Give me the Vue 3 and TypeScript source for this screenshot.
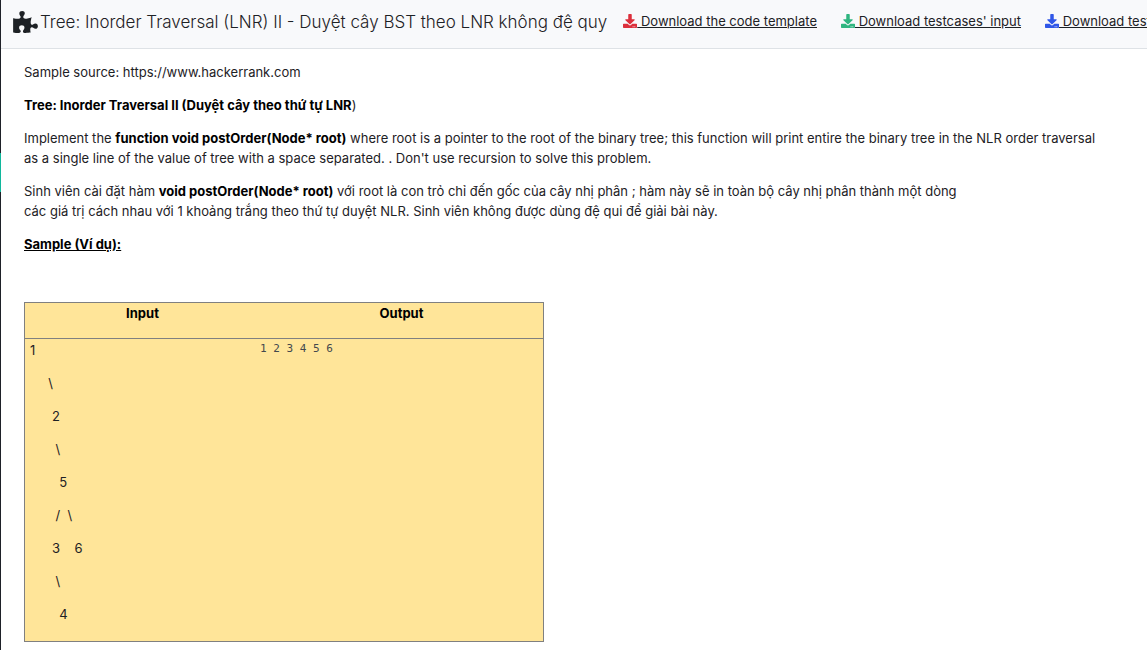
<script setup lang="ts">
interface DownloadLink {
  label: string
  tone: string
}

const downloads: DownloadLink[] = [
  { label: 'Download the code template', tone: 'red' },
  { label: "Download testcases' input", tone: 'green' },
  { label: "Download testcases' output", tone: 'blue' },
]

const treeRows: string[] = [
  '1',
  '     \\',
  '      2',
  '       \\',
  '        5',
  '       /  \\',
  '      3    6',
  '       \\',
  '        4',
]
</script>

<template>
  <div class="page">
    <aside class="rail"><span class="rail-marker"></span></aside>
    <div class="content">
      <header class="topbar">
        <h1 class="title">
          <svg class="puzzle" viewBox="0 0 576 512" aria-hidden="true">
            <path d="M519.442 288.651c-41.519 0-59.5 31.593-82.058 31.593C377.409 320.244 432 144 432 144s-196.288 80-196.288-3.297c0-35.827 36.288-46.25 36.288-85.985C272 19.216 243.885 0 210.539 0c-34.654 0-66.366 18.891-66.366 56.346 0 41.364 31.711 59.277 31.711 81.75C175.885 207.719 0 166.758 0 166.758v333.237s178.635 41.047 178.635-28.662c0-22.473-40-40.107-40-81.471 0-37.456 29.25-56.346 63.577-56.346 33.673 0 61.788 19.216 61.788 54.717 0 39.735-36.288 50.158-36.288 85.985 0 60.803 129.675 25.73 181.23 25.73 0 0-34.725-120.101 25.827-120.101 35.962 0 46.423 36.152 86.308 36.152C556.712 416 576 387.99 576 354.443c0-34.199-18.962-65.792-56.558-65.792z" />
          </svg>
          <span>Tree: Inorder Traversal (LNR) II - Duyệt cây BST theo LNR không đệ quy</span>
        </h1>
        <nav class="downloads">
          <a v-for="item in downloads" :key="item.label" href="#" class="download">
            <svg class="download-icon" :class="item.tone" viewBox="0 0 512 512" aria-hidden="true">
              <path d="M216 0h80c13.3 0 24 10.7 24 24v168h87.7c17.8 0 26.7 21.5 14.1 34.1L269.7 378.3c-7.5 7.5-19.8 7.5-27.3 0L90.1 226.1c-12.6-12.6-3.7-34.1 14.1-34.1H192V24c0-13.3 10.7-24 24-24zm296 376v112c0 13.3-10.7 24-24 24H24c-13.3 0-24-10.7-24-24V376c0-13.3 10.7-24 24-24h146.7l49 49c20.1 20.1 52.5 20.1 72.6 0l49-49H488c13.3 0 24 10.7 24 24zm-124 88c0-11-9-20-20-20s-20 9-20 20 9 20 20 20 20-9 20-20zm64 0c0-11-9-20-20-20s-20 9-20 20 9 20 20 20 20-9 20-20z" />
            </svg><span class="download-label">&nbsp;{{ item.label }}</span>
          </a>
        </nav>
      </header>

      <main class="problem">
        <p>Sample source: https://www.hackerrank.com</p>
        <p><strong>Tree: Inorder Traversal II (Duyệt cây theo thứ tự LNR</strong>)</p>
        <p>Implement the <strong>function void postOrder(Node* root)</strong> where root is a pointer to the root of the binary tree; this function will print entire the binary tree in the NLR order traversal as a single line of the value of tree with a space separated. . Don't use recursion to solve this problem.</p>
        <p>Sinh viên cài đặt hàm <strong>void postOrder(Node* root)</strong> với root là con trỏ chỉ đến gốc của cây nhị phân ; hàm này sẽ in toàn bộ cây nhị phân thành một dòng<br />các giá trị cách nhau với 1 khoảng trắng theo thứ tự duyệt NLR. Sinh viên không được dùng đệ qui để giải bài này.</p>
        <p><strong class="underlined">Sample (Ví dụ):</strong></p>

        <table class="sample">
          <thead>
            <tr>
              <th class="input-col">Input</th>
              <th>Output</th>
            </tr>
          </thead>
          <tbody>
            <tr>
              <td class="tree">
                <p v-for="(row, index) in treeRows" :key="index">{{ row }}</p>
              </td>
              <td><pre class="output">1 2 3 4 5 6</pre></td>
            </tr>
          </tbody>
        </table>
      </main>
    </div>
  </div>
</template>

<style>
body {
  margin: 0;
  overflow: hidden;
  background: #fff;
}
</style>

<style scoped>
.page {
  display: flex;
  min-height: 100vh;
  font-family: Inter, "Noto Sans", sans-serif;
  font-size: 13px;
  line-height: 20px;
  color: #1d2125;
}
.rail {
  flex: 0 0 1px;
  background: #1e2128;
}
.rail-marker {
  display: block;
  height: 39px;
  margin-top: 153px;
  background: #10b79c;
}
.content {
  flex: 1;
  min-width: 0;
}
.topbar {
  display: flex;
  align-items: center;
  gap: 16px;
  height: 48px;
  padding-left: 12px;
  overflow: hidden;
  white-space: nowrap;
  background: #f8f9fb;
  border-bottom: 1px solid #dee2e6;
}
.title {
  display: flex;
  flex: none;
  align-items: center;
  gap: 2px;
  margin: 0;
  padding-bottom: 4px;
  font-size: 17px;
  font-weight: 300;
  line-height: 24px;
}
.puzzle {
  width: 25px;
  height: 22px;
  fill: #1d2125;
}
.downloads {
  display: flex;
  flex: none;
  gap: 24px;
  padding-bottom: 6px;
}
.download {
  display: flex;
  align-items: center;
  color: #1d2125;
  text-decoration: none;
}
.download-label {
  text-decoration: underline;
}
.download-icon {
  width: 14px;
  height: 14px;
}
.red {
  fill: #dc2f3c;
}
.green {
  fill: #2fb580;
}
.blue {
  fill: #3057e8;
}
.problem {
  padding: 13px 40px 8px 23px;
}
p {
  margin: 0 0 13px;
}
strong,
th {
  font-weight: 700;
  color: #000;
}
.underlined {
  text-decoration: underline;
}
.sample {
  width: 520px;
  max-width: 100%;
  margin-top: 48px;
  table-layout: fixed;
  border-collapse: collapse;
  background: #ffe599;
  border: 1px solid #808080;
}
.input-col {
  width: 235px;
}
th {
  height: 35px;
  padding: 0;
  text-align: center;
  vertical-align: top;
  border-bottom: 1px solid #808080;
}
td {
  padding: 0;
  vertical-align: top;
}
.tree {
  padding: 1px 0 4px 5px;
  white-space: pre-wrap;
}
.output {
  margin: 0;
  font-family: "DejaVu Sans Mono", monospace;
  font-size: 11px;
  line-height: 20px;
  color: #43484d;
}
</style>
